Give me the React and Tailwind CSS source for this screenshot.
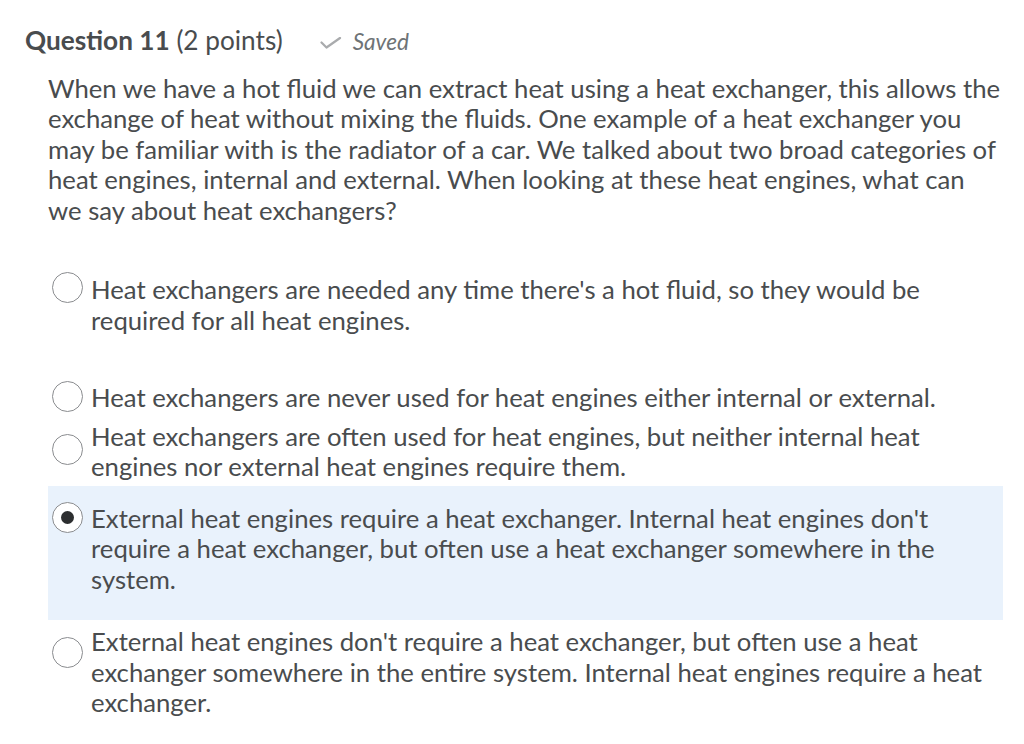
import React from "react";

const options = [
  {
    lines: [
      "Heat exchangers are needed any time there's a hot fluid, so they would be",
      "required for all heat engines.",
    ],
    radioTop: "mt-[-2px]",
    wrap: "mt-[49px]",
  },
  {
    lines: ["Heat exchangers are never used for heat engines either internal or external."],
    radioTop: "mt-[-1px]",
    wrap: "mt-[47px]",
  },
  {
    lines: [
      "Heat exchangers are often used for heat engines, but neither internal heat",
      "engines nor external heat engines require them.",
    ],
    radioTop: "mt-[13px]",
    wrap: "mt-[8px]",
  },
  {
    lines: [
      "External heat engines require a heat exchanger. Internal heat engines don't",
      "require a heat exchanger, but often use a heat exchanger somewhere in the",
      "system.",
    ],
    radioTop: "mt-[-1px]",
    selected: true,
    wrap: "mt-[4px]",
  },
  {
    lines: [
      "External heat engines don't require a heat exchanger, but often use a heat",
      "exchanger somewhere in the entire system. Internal heat engines require a heat",
      "exchanger.",
    ],
    radioTop: "mt-[11px]",
    wrap: "mt-[6px]",
  },
];

function Radio({ selected, className }) {
  return (
    <span
      className={`flex h-[31px] w-[31px] shrink-0 items-center justify-center rounded-full border border-[#8a8c8f] bg-white ${className}`}
    >
      {selected && <span className="h-[13px] w-[13px] rounded-full bg-[#2c2e30]" />}
    </span>
  );
}

export default function App() {
  return (
    <div
      className="min-h-[744px] w-[1024px] bg-white text-[#494c4e]"
      style={{ fontFamily: "Lato, 'Open Sans', sans-serif" }}
    >
      <div className="flex items-baseline pl-[25px] pt-[23px]">
        <h1 className="text-[26.2px] leading-[34px]">
          <span className="font-bold">Question 11</span> (2 points)
        </h1>
        <span className="ml-[37px] flex items-baseline gap-[11px] text-[22.6px] italic text-[#6e7376]">
          <svg width="22" height="12" viewBox="0 0 22 12" className="self-center mt-[2px]">
            <path d="M1.5 5.5 L6.5 10.5 L20 1" fill="none" stroke="#a9abad" strokeWidth="2.2" strokeLinecap="round" strokeLinejoin="round" />
          </svg>
          Saved
        </span>
      </div>

      <p className="mt-[14px] pl-[48px] text-[25.7px] leading-[30.5px]">
        When we have a hot fluid we can extract heat using a heat exchanger, this allows the
        <br />
        exchange of heat without mixing the fluids. One example of a heat exchanger you
        <br />
        may be familiar with is the radiator of a car. We talked about two broad categories of
        <br />
        heat engines, internal and external. When looking at these heat engines, what can
        <br />
        we say about heat exchangers?
      </p>

      <div className="flex flex-col">
        {options.map((o, i) => (
          <div
            key={i}
            className={`${o.wrap} ml-[48px] w-[955px] ${o.selected ? "bg-[#e9f2fc] pb-[26px] pt-[17px]" : ""}`}
          >
            <div className="flex gap-[8px] pl-[4px]">
              <Radio selected={o.selected} className={o.radioTop} />
              <div className="text-[25.7px] leading-[30.5px] whitespace-nowrap">
                {o.lines.map((l, j) => (
                  <div key={j}>{l}</div>
                ))}
              </div>
            </div>
          </div>
        ))}
      </div>
    </div>
  );
}
